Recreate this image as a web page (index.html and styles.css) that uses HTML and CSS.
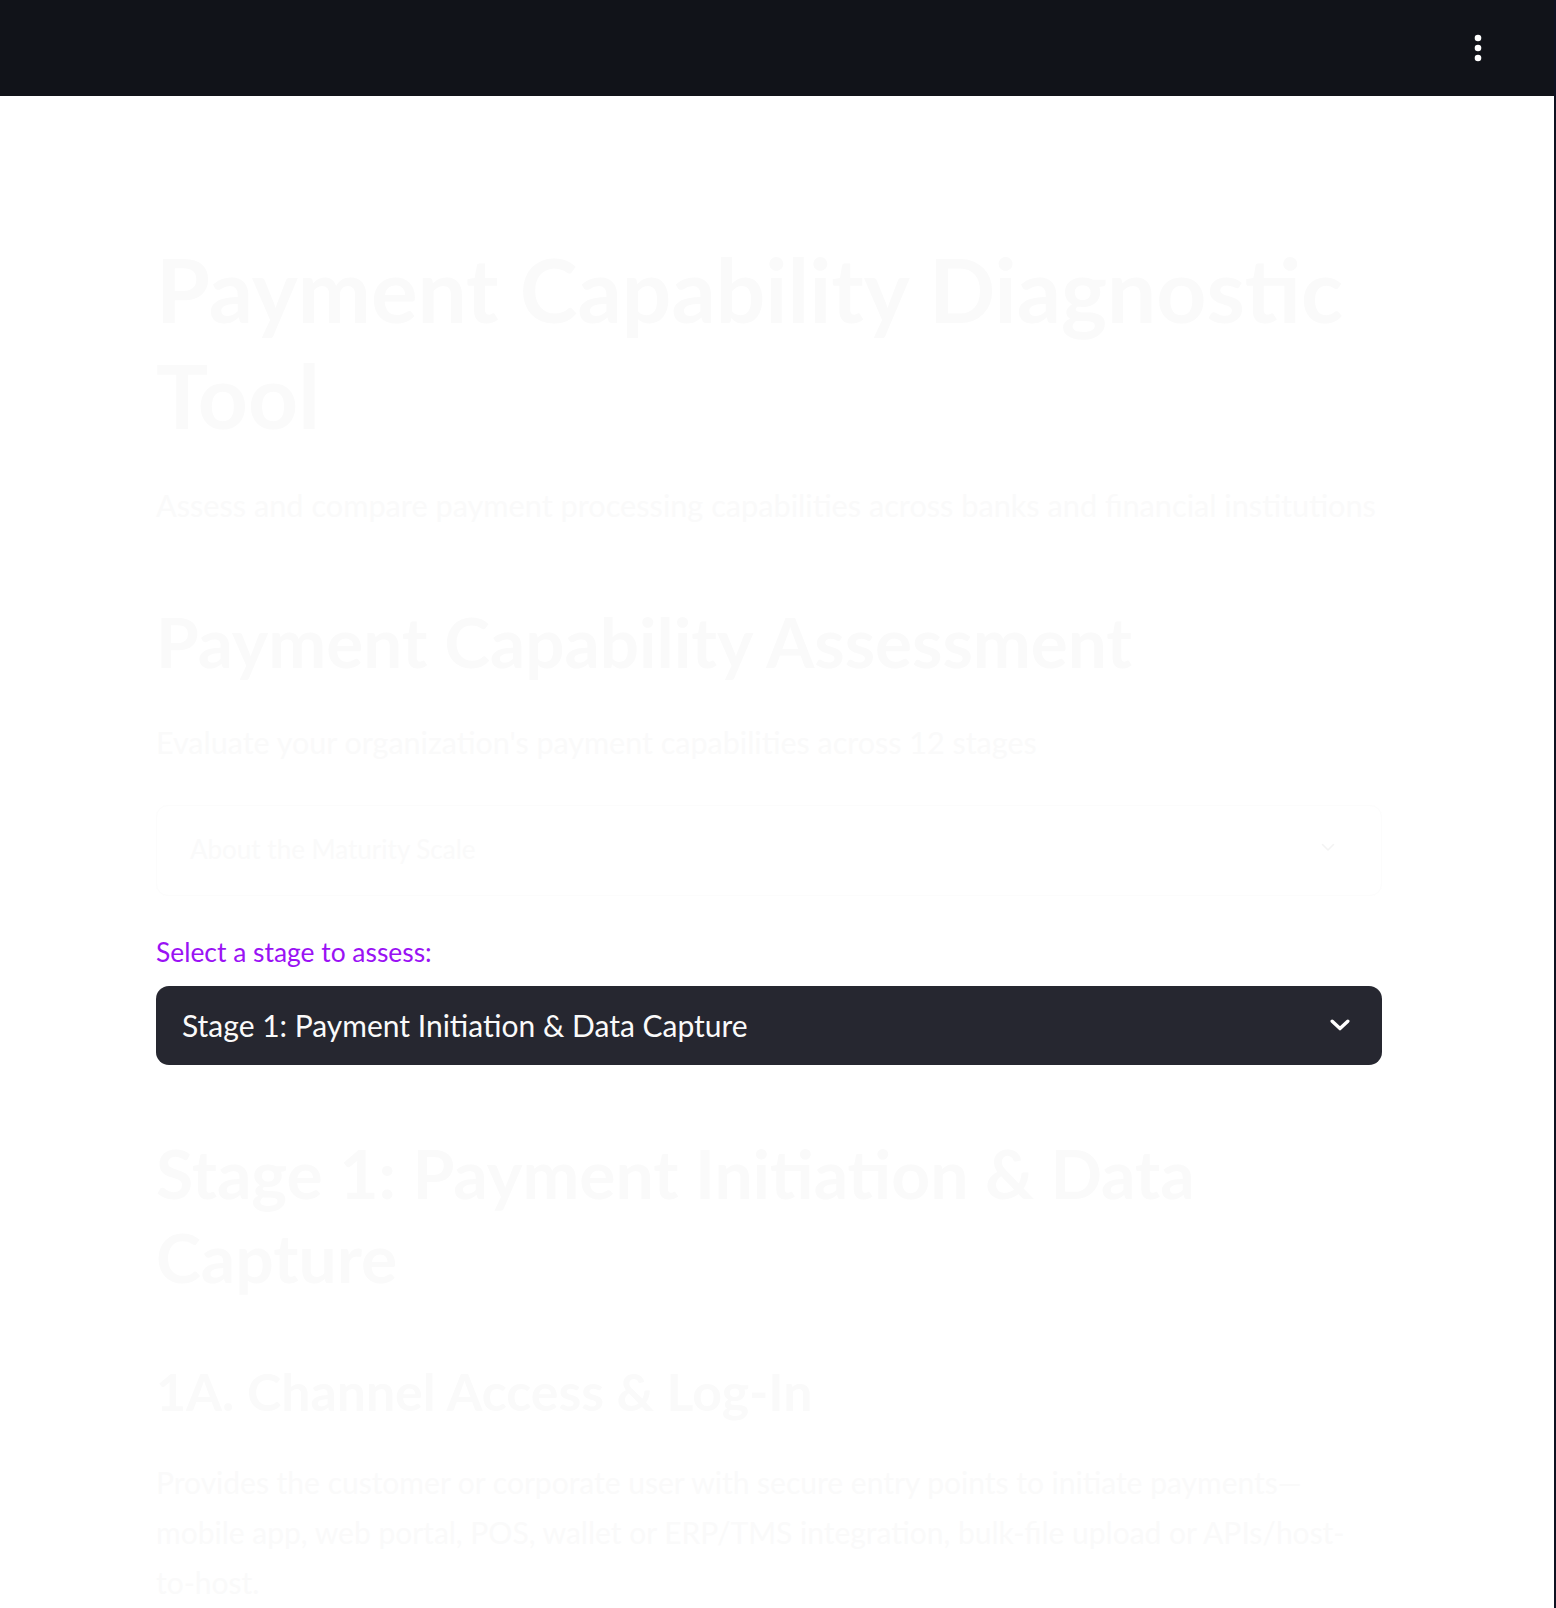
FILE: index.html
```html
<!DOCTYPE html>
<html lang="en">
<head>
<meta charset="utf-8">
<title>Payment Capability Diagnostic Tool</title>
<link rel="stylesheet" href="styles.css">
</head>
<body>
<div class="app">
  <div class="page">
    <header class="topbar">
      <button class="menu-btn" aria-label="Main menu">
        <svg width="8" height="28" viewBox="0 0 8 28" aria-hidden="true">
          <circle cx="4" cy="4" r="3.3" fill="#ffffff"/>
          <circle cx="4" cy="14" r="3.3" fill="#ffffff"/>
          <circle cx="4" cy="24" r="3.3" fill="#ffffff"/>
        </svg>
      </button>
    </header>
    <main class="main">
      <h1 class="title">Payment Capability Diagnostic Tool</h1>
      <p class="subtitle">Assess and compare payment processing capabilities across banks and financial institutions</p>

      <h2 class="section-title">Payment Capability Assessment</h2>
      <p class="lead">Evaluate your organization's payment capabilities across 12 stages</p>

      <div class="expander">
        <span class="expander-label">About the Maturity Scale</span>
        <svg class="expander-chevron" width="14" height="9" viewBox="0 0 14 9" aria-hidden="true">
          <path d="M1.5 1.5 L7 7 L12.5 1.5" fill="none" stroke="#f3f3f3" stroke-width="1.6" stroke-linecap="round" stroke-linejoin="round"/>
        </svg>
      </div>

      <label class="select-label">Select a stage to assess:</label>
      <div class="select">
        <span class="select-value">Stage 1: Payment Initiation &amp; Data Capture</span>
        <svg class="select-chevron" width="20" height="12" viewBox="0 0 20 12" aria-hidden="true">
          <path d="M2.2 2.2 L10 9.6 L17.8 2.2" fill="none" stroke="#ffffff" stroke-width="3.4" stroke-linecap="round" stroke-linejoin="round"/>
        </svg>
      </div>

      <h2 class="stage-title">Stage 1: Payment Initiation &amp; Data Capture</h2>
      <h3 class="sub-title">1A. Channel Access &amp; Log-In</h3>
      <p class="body-text">Provides the customer or corporate user with secure entry points to initiate payments—mobile app, web portal, POS, wallet or ERP/TMS integration, bulk-file upload or APIs/host-to-host.</p>
    </main>
  </div>
  <div class="edge"></div>
</div>
</body>
</html>
```

FILE: styles.css
```css
html, body {
  margin: 0;
  padding: 0;
  height: 100%;
  overflow: hidden;
  background: #ffffff;
}

body {
  font-family: "Lato", "Noto Sans", sans-serif;
  color: #fafafa;
}

.app {
  display: flex;
  min-height: 100%;
}

.page {
  flex: 1;
  min-width: 0;
}

.edge {
  width: 2px;
  background: #0f1221;
}

.topbar {
  height: 96px;
  background: #111319;
  display: flex;
  justify-content: flex-end;
  align-items: center;
  padding-right: 72px;
}

.menu-btn {
  width: 8px;
  height: 28px;
  padding: 0;
  border: 0;
  background: transparent;
  display: flex;
  margin-top: 0;
}

.main {
  width: 1226px;
  padding-left: 156px;
}

.title {
  margin: 141px 0 0;
  font-size: 87.3px;
  line-height: 106px;
  font-weight: 700;
}

.subtitle {
  margin: 33px 0 0;
  font-size: 30.7px;
  line-height: 48.8px;
  font-weight: 400;
  white-space: nowrap;
}

.section-title {
  margin: 70px 0 0;
  font-size: 69.2px;
  line-height: 82px;
  font-weight: 700;
}

.lead {
  margin: 35px 0 0;
  font-size: 30.5px;
  line-height: 48px;
}

.expander {
  margin-top: 39px;
  height: 89px;
  border: 1px solid #fcfcfc;
  border-radius: 12px;
  display: flex;
  align-items: center;
  justify-content: space-between;
  padding: 0 46px 0 33px;
}

.expander-label {
  font-size: 26px;
  line-height: 40px;
  margin-top: -3px;
}

.expander-chevron {
  margin-top: -6px;
}

.select-label {
  display: block;
  margin-top: 38px;
  font-size: 26.4px;
  line-height: 36px;
  color: #9a12f4;
}

.select {
  margin-top: 16px;
  height: 79px;
  background: #262730;
  border-radius: 13px;
  display: flex;
  align-items: center;
  justify-content: space-between;
  padding: 0 32px 0 26px;
}

.select-value {
  font-size: 30px;
  line-height: 40px;
  color: #fafafa;
}

.select-chevron {
  flex: none;
}

.stage-title {
  margin: 66px 0 0;
  font-size: 67.8px;
  line-height: 84px;
  font-weight: 700;
}

.sub-title {
  margin: 61px 0 0;
  font-size: 51.8px;
  line-height: 62px;
  font-weight: 700;
}

.body-text {
  margin: 35px 0 0;
  font-size: 30px;
  line-height: 50.3px;
}
```
